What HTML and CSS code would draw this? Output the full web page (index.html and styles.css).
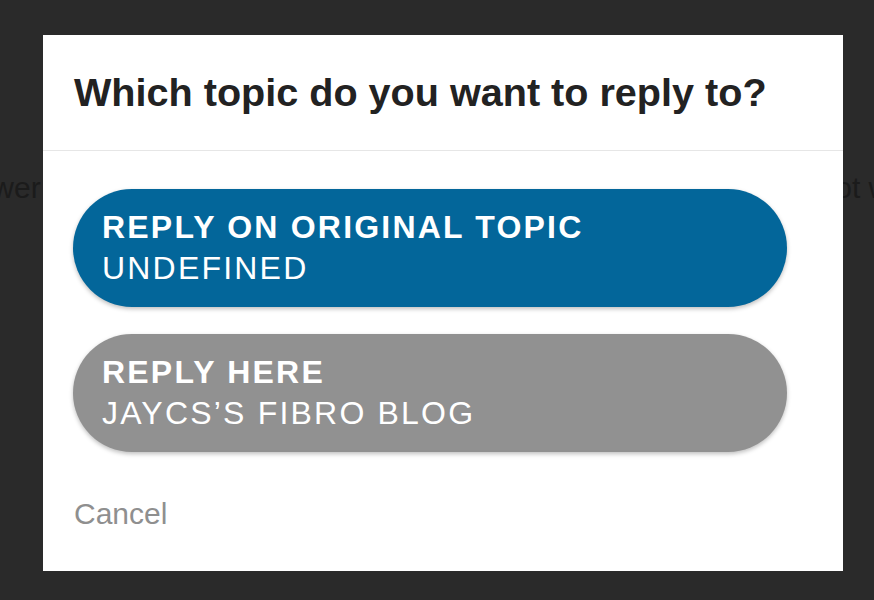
FILE: index.html
```html
<!DOCTYPE html>
<html>
<head>
<meta charset="utf-8">
<link rel="stylesheet" href="styles.css">
</head>
<body>
<div class="page">
  <div class="bg-line">
    <span class="bg-left">answer</span>
    <span class="bg-right">not want</span>
  </div>
</div>
<div class="overlay">
  <div class="modal">
    <div class="modal-header">
      <h2 class="modal-title">Which topic do you want to reply to?</h2>
    </div>
    <div class="modal-body">
      <button class="choice choice-primary">
        <span class="choice-label">REPLY ON ORIGINAL TOPIC</span>
        <span class="choice-sub">UNDEFINED</span>
      </button>
      <button class="choice choice-secondary">
        <span class="choice-label">REPLY HERE</span>
        <span class="choice-sub">JAYCS’S FIBRO BLOG</span>
      </button>
      <a class="cancel">Cancel</a>
    </div>
  </div>
</div>
</body>
</html>
```

FILE: styles.css
```css
html, body {
  margin: 0;
  padding: 0;
  height: 100%;
  overflow: hidden;
  background: #2a2a2a;
  font-family: "Liberation Sans", Arial, sans-serif;
}

.page {
  padding-top: 168px;
}

.bg-line {
  display: flex;
  justify-content: space-between;
  margin: 0 -58px 0 -56px;
  font-size: 30px;
  line-height: 40px;
  color: #1b1b1b;
  white-space: nowrap;
}

.overlay {
  position: fixed;
  inset: 0;
}

.modal {
  position: absolute;
  left: 43px;
  top: 35px;
  width: 800px;
  background: #ffffff;
}

.modal-header {
  padding: 34px 30px 34px 31px;
  border-bottom: 1px solid #e6e6e6;
}

.modal-title {
  margin: 0;
  font-size: 39.6px;
  line-height: 47px;
  font-weight: bold;
  color: #222222;
}

.modal-body {
  padding: 38px 30px 39px 30px;
  display: flex;
  flex-direction: column;
  align-items: flex-start;
}

.choice {
  display: flex;
  flex-direction: column;
  align-items: flex-start;
  width: 714px;
  height: 118px;
  padding: 18px 28px 18px 29px;
  border: none;
  border-radius: 60px;
  color: #ffffff;
  font-family: "Liberation Sans", Arial, sans-serif;
  font-size: 32px;
  line-height: 41px;
  text-align: left;
  box-shadow: 0 2px 4px rgba(0, 0, 0, 0.25);
  cursor: pointer;
}

.choice + .choice {
  margin-top: 27px;
}

.choice-primary {
  background: #03669a;
}

.choice-secondary {
  background: #919191;
}

.choice-label {
  font-weight: bold;
  letter-spacing: 2.2px;
}

.choice-sub {
  font-weight: normal;
  letter-spacing: 2.2px;
}

.cancel {
  margin-top: 44px;
  margin-left: 1px;
  font-size: 30px;
  line-height: 36px;
  color: #8f8f8f;
  cursor: pointer;
}
```
